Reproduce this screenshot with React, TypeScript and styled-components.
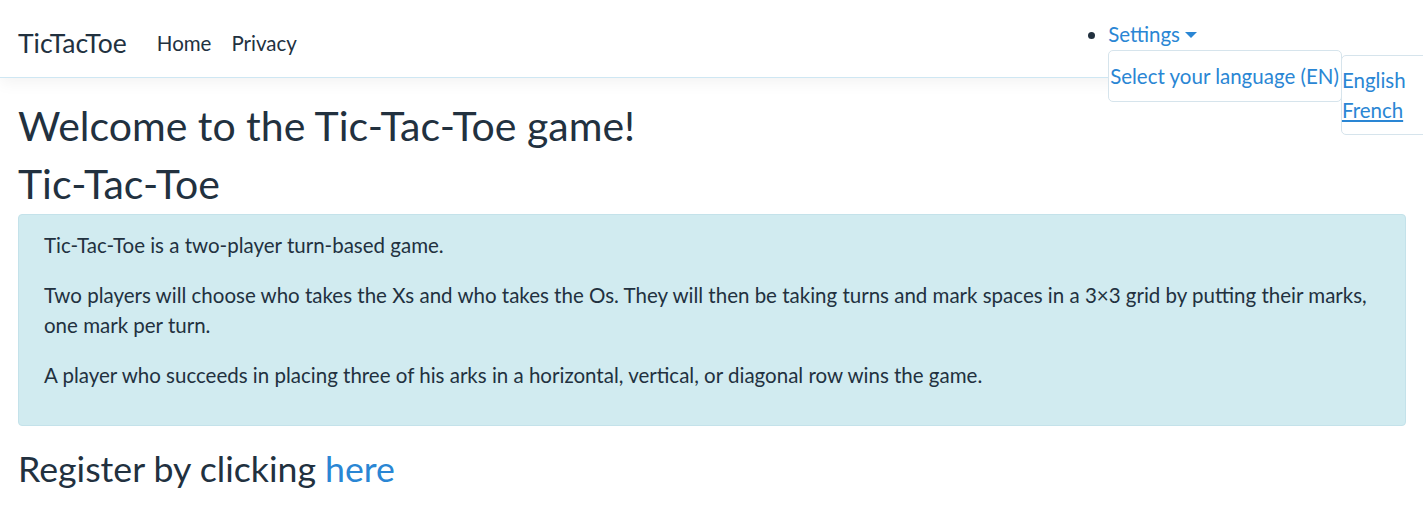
import React, { FC } from "react";
import styled, { createGlobalStyle } from "styled-components";

const TEXT = "#22313f";
const LINK = "#2a86d4";

const GlobalStyle = createGlobalStyle`
  html, body {
    margin: 0;
    padding: 0;
    background: #fff;
    overflow-x: hidden;
  }
  body {
    font-family: Lato, "Liberation Sans", Arial, sans-serif;
    font-size: 20.5px;
    line-height: 30px;
    color: ${TEXT};
  }
  * {
    box-sizing: border-box;
  }
`;

const Navbar = styled.header`
  display: flex;
  align-items: center;
  height: 78px;
  padding: 0 18px;
  border-bottom: 1px solid #cfe7f3;
  box-shadow: 0 5px 15px rgba(0, 0, 0, 0.05);
  margin-bottom: 20px;
`;

const Brand = styled.a`
  font-size: 26.5px;
  line-height: 30px;
  color: ${TEXT};
  text-decoration: none;
  margin-right: 20px;
  margin-top: 8px;
`;

const NavLinks = styled.nav`
  display: flex;
  margin-top: 8px;
`;

const NavLink = styled.a`
  padding: 0 10px;
  color: ${TEXT};
  text-decoration: none;
  line-height: 30px;
`;

const SettingsList = styled.ul`
  align-self: flex-start;
  margin: 19px 208px 0 auto;
  padding: 0 0 0 18px;
  list-style: disc;
  color: ${TEXT};
`;

const SettingsItem = styled.li`
  position: relative;
  line-height: 30px;
`;

const Toggle = styled.a`
  color: ${LINK};
  text-decoration: none;
  cursor: pointer;

  &::after {
    content: "";
    display: inline-block;
    margin-left: 5px;
    vertical-align: 4px;
    border-top: 6px solid ${LINK};
    border-left: 6px solid transparent;
    border-right: 6px solid transparent;
  }
`;

const Menu = styled.div`
  position: absolute;
  top: 31px;
  left: 0;
  padding: 10px 2px 10px 1px;
  white-space: nowrap;
  background: #fff;
  border: 1px solid #d6e4ec;
  border-radius: 5px;
  color: ${LINK};
`;

const SubMenu = styled.div`
  position: absolute;
  top: 4px;
  left: 100%;
  width: 120px;
  padding: 9px 0 9px;
  background: #fff;
  border: 1px solid #d6e4ec;
  border-radius: 5px;
  display: flex;
  flex-direction: column;
`;

const SubItem = styled.a<{ $hover?: boolean }>`
  color: ${LINK};
  line-height: 30px;
  text-decoration: ${(p) => (p.$hover ? "underline" : "none")};
`;

const Main = styled.main`
  padding: 0 17px 0 18px;
`;

const Title = styled.h1`
  margin: 0 0 2px;
  font-size: 41px;
  font-weight: 400;
  line-height: 56px;
`;

const Info = styled.div`
  padding: 15px 25px;
  margin-bottom: 20px;
  background: #d1ebf0;
  border: 1px solid #c4e2ea;
  border-radius: 4px;

  p {
    margin: 0 0 20px;
  }
`;

const SubTitle = styled.h2`
  margin: 0;
  font-size: 35.7px;
  font-weight: 400;
  line-height: 45px;

  a {
    color: ${LINK};
    text-decoration: none;
  }
`;

const App: FC = () => {
  return (
    <>
      <GlobalStyle />
      <Navbar>
        <Brand href="#">TicTacToe</Brand>
        <NavLinks>
          <NavLink href="#">Home</NavLink>
          <NavLink href="#">Privacy</NavLink>
        </NavLinks>
        {/* language switcher, opened */}
        <SettingsList>
          <SettingsItem>
            <Toggle>Settings</Toggle>
            <Menu>
              Select your language (EN)
              <SubMenu>
                <SubItem href="#">English</SubItem>
                <SubItem href="#" $hover>
                  French
                </SubItem>
              </SubMenu>
            </Menu>
          </SettingsItem>
        </SettingsList>
      </Navbar>
      <Main>
        <Title>Welcome to the Tic-Tac-Toe game!</Title>
        <Title>Tic-Tac-Toe</Title>
        <Info>
          <p>Tic-Tac-Toe is a two-player turn-based game.</p>
          <p>
            Two players will choose who takes the Xs and who takes the Os. They will then be
            taking turns and mark spaces in a 3×3 grid by putting their marks, one mark per turn.
          </p>
          <p>
            A player who succeeds in placing three of his arks in a horizontal, vertical, or
            diagonal row wins the game.
          </p>
        </Info>
        <SubTitle>
          Register by clicking <a href="#">here</a>
        </SubTitle>
      </Main>
    </>
  );
};

export default App;
